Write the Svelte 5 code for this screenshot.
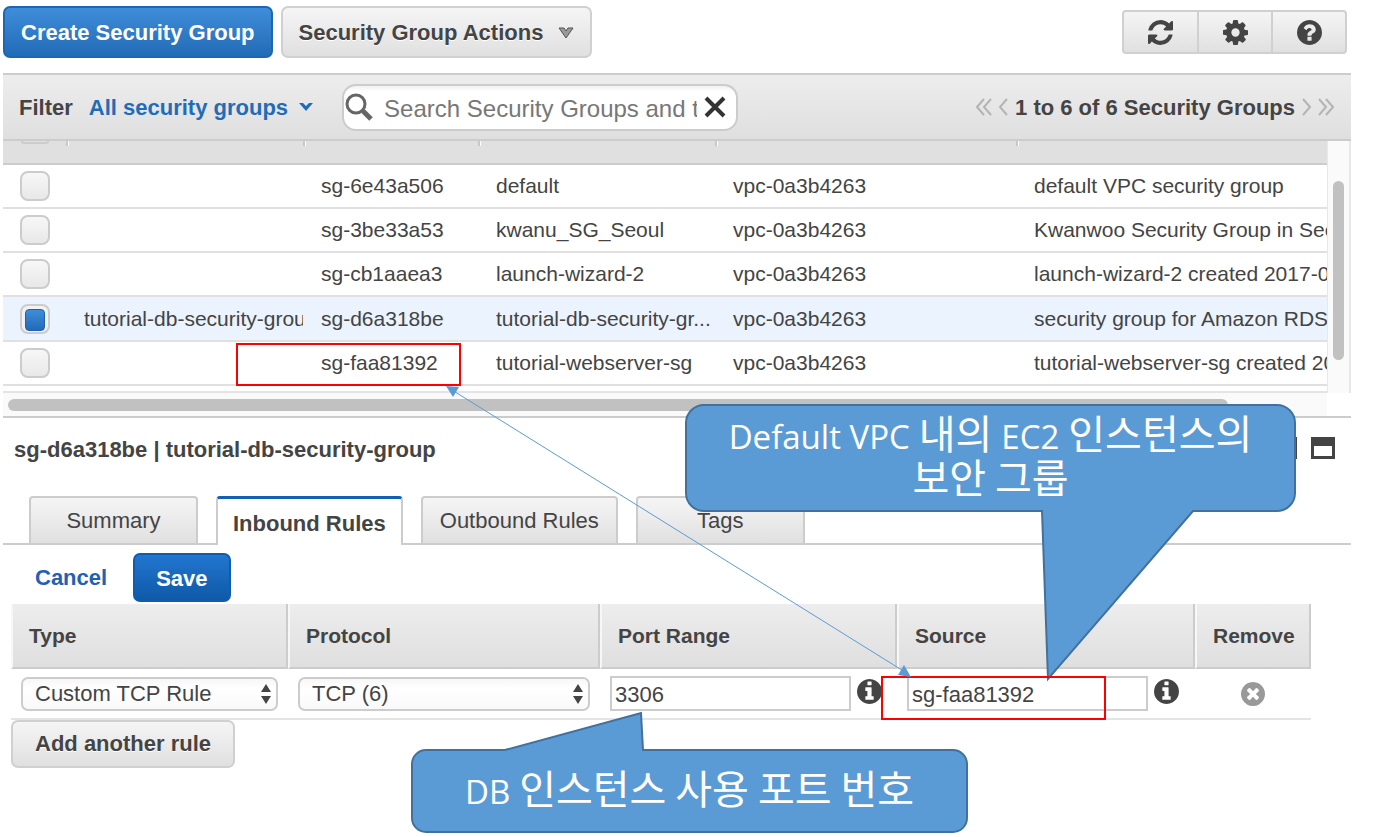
<script>
  const groups = [
    { name: '', id: 'sg-6e43a506', group: 'default', vpc: 'vpc-0a3b4263', desc: 'default VPC security group' },
    { name: '', id: 'sg-3be33a53', group: 'kwanu_SG_Seoul', vpc: 'vpc-0a3b4263', desc: 'Kwanwoo Security Group in Seoul' },
    { name: '', id: 'sg-cb1aaea3', group: 'launch-wizard-2', vpc: 'vpc-0a3b4263', desc: 'launch-wizard-2 created 2017-04' },
    { name: 'tutorial-db-security-group', id: 'sg-d6a318be', group: 'tutorial-db-security-gr...', vpc: 'vpc-0a3b4263', desc: 'security group for Amazon RDS', selected: true },
    { name: '', id: 'sg-faa81392', group: 'tutorial-webserver-sg', vpc: 'vpc-0a3b4263', desc: 'tutorial-webserver-sg created 20' },
  ];
  const tabs = ['Summary', 'Inbound Rules', 'Outbound Rules', 'Tags'];
  let active = $state('Inbound Rules');
  let port = $state('3306');
  let source = $state('sg-faa81392');

  const disc = 'm0 0q0 209-103 385.5t-279.5 279.5-385.5 103-385.5-103-279.5-279.5-103-385.5 103-385.5 279.5-279.5 385.5-103 385.5 103 279.5 279.5 103 385.5z';
  const icons = {
    refresh: 'M1639 1056q0 5-1 7-64 268-268 434.5t-478 166.5q-146 0-282.5-55t-243.5-157l-129 129q-19 19-45 19t-45-19-19-45v-448q0-26 19-45t45-19h448q26 0 45 19t19 45-19 45l-137 137q71 66 161 102t187 36q134 0 250-65t186-179q11-17 53-117 8-23 30-23h192q13 0 22.5 9.5t9.5 22.5zm25-800v448q0 26-19 45t-45 19h-448q-26 0-45-19t-19-45 19-45l138-138q-148-137-349-137-134 0-250 65t-186 179q-11 17-53 117-8 23-30 23h-199q-13 0-22.5-9.5t-9.5-22.5v-7q65-268 270-434.5t480-166.5q146 0 284 55.5t245 156.5l130-129q19-19 45-19t45 19 19 45z',
    cog: 'M1152 896q0-106-75-181t-181-75-181 75-75 181 75 181 181 75 181-75 75-181zm512-109v222q0 12-8 23t-20 13l-185 28q-19 54-39 91 35 50 107 138 10 12 10 25t-9 23q-27 37-99 108t-94 71q-12 0-26-9l-138-108q-44 23-91 38-16 136-29 186-7 28-36 28h-222q-14 0-24.5-8.5t-11.5-21.5l-28-184q-49-16-90-37l-141 107q-10 9-25 9-14 0-25-11-126-114-165-168-7-10-7-23 0-12 8-23 15-21 51-66.5t54-70.5q-27-50-41-99l-183-27q-13-2-21-12.5t-8-23.5v-222q0-12 8-23t19-13l186-28q14-46 39-92-40-57-107-138-10-12-10-24 0-10 9-23 26-36 98.5-107.5t94.5-71.5q13 0 26 10l138 107q44-23 91-38 16-136 29-186 7-28 36-28h222q14 0 24.5 8.5t11.5 21.5l28 184q49 16 90 37l142-107q9-9 24-9 13 0 25 10 129 119 165 170 7 8 7 22 0 12-8 23-15 21-51 66.5t-54 70.5q26 50 41 98l183 28q13 2 21 12.5t8 23.5z',
    help: 'M1024 1376v-192q0-14-9-23t-23-9h-192q-14 0-23 9t-9 23v192q0 14 9 23t23 9h192q14 0 23-9t9-23zm256-672q0-88-55.5-163t-138.5-116-170-41q-243 0-371 213-15 24 8 42l132 100q7 6 19 6 16 0 25-12 53-68 86-92 34-24 86-24 48 0 85.5 26t37.5 59q0 38-20 61t-68 45q-63 28-115.5 86.5t-52.5 125.5v36q0 14 9 23t23 9h192q14 0 23-9t9-23q0-19 21.5-49.5t54.5-49.5q32-18 49-28.5t46-35 44.5-48 28-60.5 12.5-81zM1664 896' + disc,
    info: 'M1152 1376v-160q0-14-9-23t-23-9h-96v-512q0-14-9-23t-23-9h-320q-14 0-23 9t-9 23v160q0 14 9 23t23 9h96v320h-96q-14 0-23 9t-9 23v160q0 14 9 23t23 9h448q14 0 23-9t9-23zm-128-896v-160q0-14-9-23t-23-9h-192q-14 0-23 9t-9 23v160q0 14 9 23t23 9h192q14 0 23-9t9-23zM1664 896' + disc,
    remove: 'M1277 1122q0-26-19-45l-181-181 181-181q19-19 19-45 0-27-19-46l-90-90q-19-19-46-19-26 0-45 19l-181 181-181-181q-19-19-45-19-27 0-46 19l-90 90q-19 19-19 46 0 26 19 45l181 181-181 181q-19 19-19 45 0 27 19 46l90 90q19 19 46 19 26 0 45-19l181-181 181 181q19 19 45 19 27 0 46-19l90-90q19-19 19-46zM1664 896' + disc,
  };
</script>

{#snippet icon(name)}
  <svg class="icon" viewBox="128 128 1536 1536" aria-hidden="true"><path d={icons[name]} /></svg>
{/snippet}

{#snippet pager(d, label, w)}
  <button class="page-btn" aria-label={label}>
    <svg width={w} height="18" aria-hidden="true"><path {d} fill="none" stroke="#b4b4b4" stroke-width="2" /></svg>
  </button>
{/snippet}

{#snippet pane()}
  <svg width="24" height="22" aria-hidden="true"><path fill="#444" fill-rule="evenodd" d="M0 0h24v22H0zM3 9v10h18V9z" /></svg>
{/snippet}

{#snippet steppers()}
  <svg class="steppers" width="10" height="20" aria-hidden="true"><path fill="#444" d="M0 8 5 0l5 8zM0 12h10l-5 8z" /></svg>
{/snippet}

<div class="screen">
  <div class="page">
    <header class="toolbar">
      <button class="btn primary">Create Security Group</button>
      <button class="btn">
        Security Group Actions
        <svg width="16" height="12" aria-hidden="true"><path d="M1 1h5l2 3 2-3h5L8 11z" fill="#999" stroke="#555" stroke-width="1" /></svg>
      </button>
      <div class="icon-group">
        <button aria-label="Refresh">{@render icon('refresh')}</button>
        <button aria-label="Settings">{@render icon('cog')}</button>
        <button aria-label="Help">{@render icon('help')}</button>
      </div>
    </header>

    <section class="filter">
      <span class="filter-label">Filter</span>
      <button class="filter-menu">
        All security groups
        <svg width="14" height="10" aria-hidden="true"><path d="M0 0h4l3 3 3-3h4L7 8z" fill="#1f6cb8" /></svg>
      </button>
      <div class="search">
        <svg width="28" height="28" aria-hidden="true">
          <circle cx="11" cy="11" r="9" fill="none" stroke="#666" stroke-width="3" />
          <path d="m18 18 8 8" stroke="#666" stroke-width="5" />
        </svg>
        <input type="text" aria-label="Search" placeholder="Search Security Groups and t" />
        <button aria-label="Clear">
          <svg width="22" height="22" aria-hidden="true"><path d="m2 2 18 18M20 2 2 20" stroke="#333" stroke-width="4" /></svg>
        </button>
      </div>
      <div class="pager">
        {@render pager('M8 1 1 9l7 8M15 1 8 9l7 8', 'First page', 16)}
        {@render pager('M9 1 2 9l7 8', 'Previous page', 11)}
        <span>1 to 6 of 6 Security Groups</span>
        {@render pager('m2 1 7 8-7 8', 'Next page', 11)}
        {@render pager('m1 1 7 8-7 8M8 1l7 8-7 8', 'Last page', 16)}
      </div>
    </section>

    <section class="list">
      <div class="list-main">
        <div class="viewport">
          <table class="groups">
            <colgroup><col class="c-check" /><col class="c-name" /><col class="c-id" /><col class="c-group" /><col class="c-vpc" /><col /></colgroup>
            <thead>
              <tr>
                <th aria-label="Select"><i class="check-edge"></i></th>
                <th aria-label="Name"></th><th aria-label="Group ID"></th><th aria-label="Group Name"></th><th aria-label="VPC"></th><th aria-label="Description"></th>
              </tr>
            </thead>
            <tbody>
              {#each groups as g}
                <tr class:selected={g.selected}>
                  <td class="check"><input type="checkbox" aria-label={g.id} checked={g.selected} /></td>
                  <td><div class="clip">{g.name}</div></td>
                  <td>{g.id}</td>
                  <td>{g.group}</td>
                  <td>{g.vpc}</td>
                  <td>{g.desc}</td>
                </tr>
              {/each}
            </tbody>
          </table>
        </div>
        <div class="vbar"><i></i></div>
      </div>
      <div class="hbar"><i></i></div>
    </section>

    <section class="details">
      <div class="title">
        <h2>sg-d6a318be | tutorial-db-security-group</h2>
        <button aria-label="Split view">{@render pane()}</button>
        <button aria-label="Full view">{@render pane()}</button>
      </div>
      <div class="tabs" role="tablist">
        {#each tabs as t}
          <button role="tab" aria-selected={active === t} class:active={active === t} onclick={() => (active = t)}>{t}</button>
        {/each}
      </div>
      <div class="actions">
        <a href="#cancel">Cancel</a>
        <button class="btn primary save">Save</button>
      </div>
      <div class="rules-wrap">
        <table class="rules">
          <colgroup><col class="r-type" /><col class="r-proto" /><col class="r-port" /><col class="r-source" /><col class="r-remove" /></colgroup>
          <thead>
            <tr><th>Type</th><th>Protocol</th><th>Port Range</th><th>Source</th><th>Remove</th></tr>
          </thead>
          <tbody>
            <tr>
              <td><div class="select"><select aria-label="Type"><option>Custom TCP Rule</option></select>{@render steppers()}</div></td>
              <td><div class="select"><select aria-label="Protocol"><option>TCP (6)</option></select>{@render steppers()}</div></td>
              <td><div class="field"><input type="text" aria-label="Port Range" bind:value={port} />{@render icon('info')}</div></td>
              <td><div class="field"><input type="text" aria-label="Source" bind:value={source} />{@render icon('info')}</div></td>
              <td class="remove"><button aria-label="Remove rule">{@render icon('remove')}</button></td>
            </tr>
          </tbody>
        </table>
        <button class="btn add">Add another rule</button>
      </div>
    </section>
  </div>

  <!-- Notes drawn over the console -->
  <svg class="overlay" aria-hidden="true">
    <g fill="#5b9bd5" stroke="#41719c" stroke-width="2">
      <path d="M704 405H1277a18 18 0 0 1 18 18V493a18 18 0 0 1-18 18H1193L1048 679 1042 511H704a18 18 0 0 1-18-18V423a18 18 0 0 1 18-18z" />
      <path d="M426 750H505L641 713 643 750H953a14 14 0 0 1 14 14V818a14 14 0 0 1-14 14H426a14 14 0 0 1-14-14V764a14 14 0 0 1 14-14z" />
    </g>
    <g fill="none" stroke="#f00" stroke-width="2">
      <path d="M237 344H460V385H237z" />
      <path d="M882 677H1105V719H882z" />
    </g>
    <path d="M452 390 905 672" stroke="#5b9bd5" />
    <path d="M446 386l13 1-6 10zM911 677l-13-2 6-10z" fill="#5b9bd5" />
  </svg>
  <p class="note note-source"><span>Default VPC</span> 내의 <span>EC2</span> 인스턴스의<br />보안 그룹</p>
  <p class="note note-port"><span>DB</span> 인스턴스 사용 포트 번호</p>
</div>

<style>
  :global(body) { background: #fff; }
  .screen, .screen * { box-sizing: border-box; }
  .screen {
    position: relative;
    min-height: 100vh;
    overflow: hidden;
    color: #444;
    font: 22px/26px 'Liberation Sans', Arial, sans-serif;
  }
  .page { padding: 6px 22px 0 3px; }
  button, input, select { font: inherit; color: inherit; }
  button { padding: 0; border: 0; background: none; cursor: pointer; }
  svg { display: block; flex: none; }
  .icon { width: 25px; height: 25px; fill: #444; }

  .btn {
    display: flex;
    align-items: center;
    gap: 15px;
    height: 52px;
    padding: 2px 16px 0;
    border: 2px solid #d0d0d0;
    border-radius: 7px;
    background: linear-gradient(#f5f5f5, #e0e0e0);
    font-weight: bold;
    text-shadow: 0 1px 0 #fff;
    white-space: nowrap;
  }
  .primary {
    border-color: #1c67b5;
    background: linear-gradient(#3f8dda, #226bb6);
    color: #fff;
    text-shadow: none;
  }

  .toolbar { display: flex; align-items: flex-start; gap: 8px; height: 67px; }
  .icon-group {
    display: flex;
    margin: 4px 4px 0 auto;
    border: 2px solid #d0d0d0;
    border-radius: 4px;
    background: linear-gradient(#f5f5f5, #e0e0e0);
  }
  .icon-group button { display: grid; place-items: center; width: 73px; height: 40px; }
  .icon-group button + button { width: 74px; border-left: 2px solid #d0d0d0; }

  .filter {
    display: flex;
    align-items: center;
    height: 68px;
    padding: 0 17px 0 16px;
    border-top: 2px solid #ccc;
    border-bottom: 2px solid #ccc;
    background: linear-gradient(#ededed, #dfdfdf);
    font-weight: bold;
    white-space: nowrap;
  }
  .filter-label, .filter-menu, .pager span { padding-top: 2px; }
  .filter-menu { display: flex; align-items: center; gap: 11px; margin: 0 29px 0 16px; color: #1f6cb8; font-weight: bold; }
  .search {
    display: flex;
    align-items: center;
    width: 396px;
    height: 47px;
    padding: 0 10px 0 1px;
    border: 2px solid #ccc;
    border-radius: 14px;
    background: linear-gradient(#f2f2f2, #fff 6px);
  }
  .search input {
    flex: 1;
    min-width: 0;
    margin: 0 7px 0 11px;
    padding: 3px 0 0;
    border: 0;
    outline: 0;
    background: none;
    font-size: 24px;
    font-weight: normal;
  }
  .search input::placeholder { color: #777; opacity: 1; }
  .pager { display: flex; align-items: center; gap: 6px; margin-left: auto; }
  .page-btn { display: block; }

  .list-main { display: flex; }
  .viewport { flex: 1; min-width: 0; overflow: hidden; border-bottom: 2px solid #e4e4e4; padding-bottom: 5px; }
  .groups { width: 100%; table-layout: fixed; border-collapse: separate; border-spacing: 0; font-size: 21px; }
  .c-check { width: 63px; }
  .c-name { width: 237px; }
  .c-id { width: 175px; }
  .c-group { width: 237px; }
  .c-vpc { width: 301px; }
  .groups th {
    height: 24px;
    padding: 0;
    border-bottom: 2px solid #ccc;
    background: linear-gradient(90deg, #c8c8c8 2px, #fff 2px) 0 0 / 3px 5px no-repeat, #e0e0e0;
    vertical-align: top;
  }
  .groups th:first-child { background: #e0e0e0; }
  .check-edge { display: block; width: 28px; height: 3px; margin-left: 18px; border: 2px solid #ccc; border-top: 0; border-radius: 0 0 8px 8px; }
  .groups td {
    height: 44px;
    padding: 0 0 0 18px;
    border-bottom: 2px solid #e0e0e0;
    overflow: hidden;
    white-space: nowrap;
  }
  .groups .selected td { height: 45px; background: #eaf3fe; }
  .clip { overflow: hidden; }
  .groups input {
    display: block;
    appearance: none;
    width: 30px;
    height: 30px;
    margin: 0;
    border: 2px solid #ccc;
    border-radius: 8px;
    background: linear-gradient(#f7f7f7, #e8e8e8);
  }
  .groups td.check { padding-left: 17px; }
  .groups input:checked { padding: 3px; background: #f2f2f2; }
  .groups input:checked::before {
    content: '';
    display: block;
    height: 20px;
    border: 1px solid #1c62ae;
    border-radius: 4px;
    background: linear-gradient(#3f8dda, #226bb6);
  }
  .vbar { width: 24px; padding: 40px 5px 33px; border: solid #e8e8e8; border-width: 0 2px 0 1px; background: #fafafa; }
  .vbar i { display: block; height: 100%; border-radius: 6px; background: #c1c1c1; }
  .hbar { height: 25px; padding: 6px 123px 0 5px; border-bottom: 2px solid #ccc; background: linear-gradient(#fafafa, #fafafa) 0 0 / calc(100% - 24px) 100% no-repeat; }
  .hbar i { display: block; height: 12px; border-radius: 6px; background: #c1c1c1; }

  .title { display: flex; align-items: center; gap: 14px; height: 78px; padding: 0 16px 18px 11px; }
  h2 { flex: 1; margin: 0; padding-top: 4px; font-size: 22px; line-height: 26px; }
  .tabs { display: flex; align-items: flex-end; gap: 18px; height: 49px; padding-left: 26px; background: linear-gradient(#ccc, #ccc) 0 100% / 100% 2px no-repeat; }
  .tabs button {
    min-width: 169px;
    height: 49px;
    padding: 0 17px;
    border: 2px solid #ccc;
    border-radius: 4px 4px 0 0;
    background: linear-gradient(#f5f5f5, #e0e0e0);
  }
  .tabs .active { padding: 4px 15px 0; border-top: 3px solid #1160b4; border-bottom: 0; background: #fff; font-weight: bold; }

  .actions { display: flex; align-items: center; gap: 26px; padding: 8px 0 2px 32px; }
  .actions a { color: #1f62b4; font-weight: bold; text-decoration: none; }
  .save { height: 49px; padding: 2px 21px 0; border-color: #0f5cb0; background: linear-gradient(#2276cf, #0f59a8); }

  .rules-wrap { padding: 0 40px 0 8px; }
  .rules { width: 100%; table-layout: fixed; border-collapse: separate; border-spacing: 0; }
  .r-type { width: 277px; }
  .r-proto { width: 312px; }
  .r-port { width: 297px; }
  .r-source { width: 298px; }
  .r-remove { width: 116px; }
  .rules th {
    height: 65px;
    padding: 0 0 0 16px;
    border-right: 2px solid #ccc;
    border-bottom: 2px solid #ccc;
    border-left: 2px solid #f7f7f7;
    background: linear-gradient(#ededed, #dfdfdf);
    font-size: 21px;
    text-align: left;
  }
  .rules td { height: 51px; padding: 0 10px; border-bottom: 2px solid #e4e4e4; }
  .select { position: relative; }
  .select select {
    display: block;
    appearance: none;
    width: 100%;
    height: 34px;
    padding: 0 30px 0 12px;
    border: 2px solid #ccc;
    border-radius: 7px;
    background: linear-gradient(#f7f7f7, #fff 10px, #f9f9f9);
    line-height: 30px;
  }
  .steppers { position: absolute; top: 7px; right: 7px; }
  .field { display: flex; align-items: center; gap: 6px; }
  .field input { width: 241px; height: 35px; padding: 2px 3px 0; border: 2px solid #ccc; border-radius: 0; background: #fff; }
  .field .icon { margin-bottom: 4px; }
  .remove button { display: block; margin: 0 auto; }
  .remove .icon { width: 24px; height: 24px; fill: #999; }
  .add { height: 48px; padding: 0 22px; }

  .overlay { position: absolute; inset: 0; width: 100%; height: 100%; pointer-events: none; }
  .note {
    position: absolute;
    margin: 0;
    color: #fff;
    font: 400 40px/44px 'Noto Sans CJK KR', sans-serif;
    text-align: center;
    white-space: nowrap;
    pointer-events: none;
  }
  .note span { font: 400 33px/1px 'Open Sans', 'Noto Sans', sans-serif; }
  .note-source { left: 686px; top: 410px; width: 609px; }
  .note-port { left: 412px; top: 765px; width: 555px; }
</style>
